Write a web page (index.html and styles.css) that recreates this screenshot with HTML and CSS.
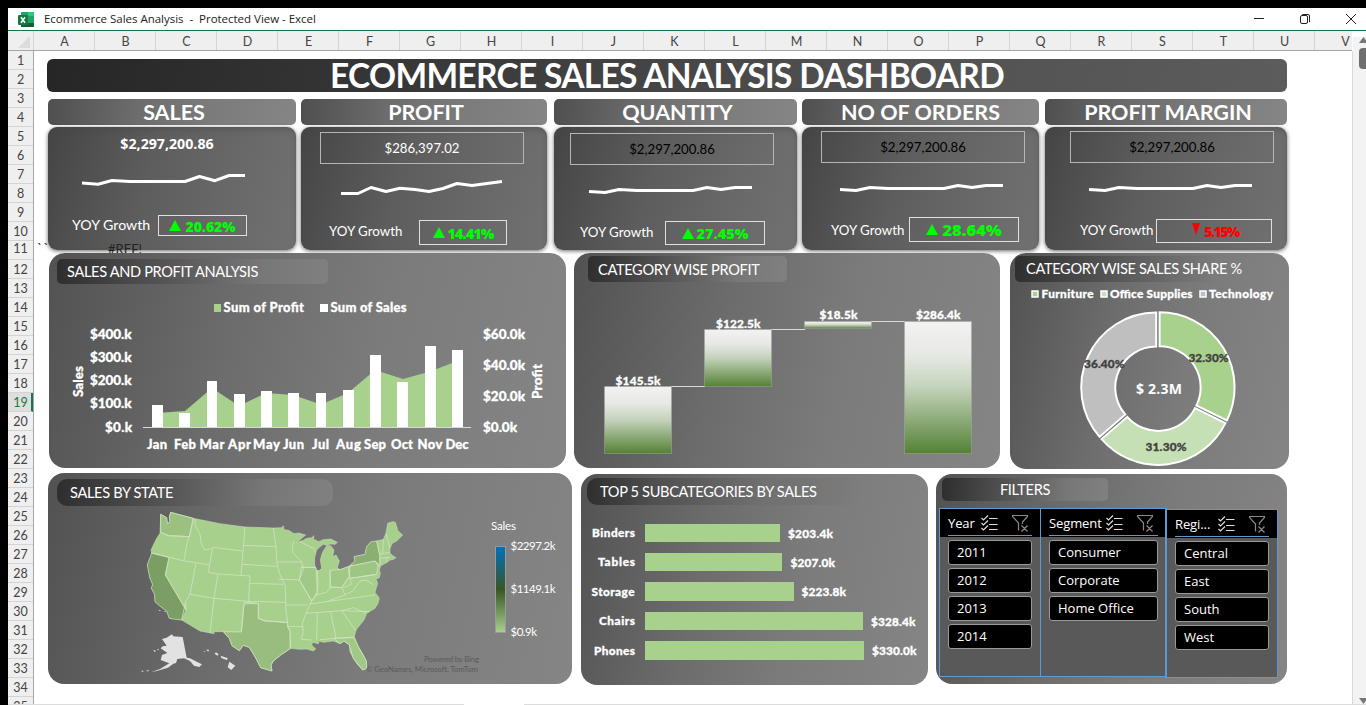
FILE: index.html
```html
<!DOCTYPE html>
<html lang="en">
<head>
<meta charset="utf-8">
<title>Ecommerce Sales Analysis - Excel</title>
<link rel="stylesheet" href="styles.css">
</head>
<body>
<div class="window">
  <header class="titlebar">
    <svg class="xl" width="17" height="17" viewBox="0 0 17 17"><rect x="3" y="1" width="13" height="15" rx="1" fill="#21a366"/><rect x="10" y="1" width="6" height="4" fill="#33c481"/><rect x="3" y="8" width="7" height="4" fill="#107c41"/><rect x="3" y="12" width="13" height="4" fill="#185c37"/><rect x="0" y="4" width="10" height="10" rx="1" fill="#107c41"/><path d="M3 6.2l4 5.6M7 6.2l-4 5.6" stroke="#fff" stroke-width="1.5"/></svg>
    <span class="doc">Ecommerce Sales Analysis&nbsp; -&nbsp; Protected View - Excel</span>
    <svg class="winbtns" width="106" height="16" viewBox="1252 11 106 16" fill="none" stroke="#222"><path d="M1254 18.5h10"/><rect x="1300.500" y="15.500" width="7" height="8" rx="1.500"/><path d="M1302.500 15v-.5h5.500q1.500 0 1.500 1.500v6"/><path d="M1346 14l10 10M1356 14l-10 10"/></svg>
  </header>
  <div class="colheads" id="cols"><span class="corner"><svg width="12" height="12"><path d="M12 0v12H0z" fill="#dcdcdc"/></svg></span></div>
  <div class="main">
    <div class="rowheads" id="rows"></div>
    <main class="sheet">
      <h1 class="banner">ECOMMERCE SALES ANALYSIS DASHBOARD</h1>
      <div class="heads">
        <h2>SALES</h2><h2>PROFIT</h2><h2>QUANTITY</h2><h2>NO OF ORDERS</h2><h2>PROFIT MARGIN</h2>
      </div>
      <div class="cards">
        <section class="card c1">
          <div class="value">$2,297,200.86</div>
          <svg class="spark" viewBox="48 170 248 30"><path d="M82 183L98 184.300L112 180.500L130 181.500H185L199.500 176.500L215 180.700L229 175.500H245"/></svg>
          <div class="growth"><span class="lbl">YOY Growth</span><span class="badge"><svg class="tri" viewBox="0 0 12 11"><path d="M6 0l6 11H0z"/></svg><b>20.62%</b></span></div>
        </section>
        <section class="card c2">
          <div class="value">$286,397.02</div>
          <svg class="spark" viewBox="301 170 246 30"><path d="M341 193.500H358L371 187.500L386 191.500L400 188.300L415 189.500L429 191.500L443 188.500L457 183.500L472 185.500L502 181.500"/></svg>
          <div class="growth"><span class="lbl">YOY Growth</span><span class="badge"><svg class="tri" viewBox="0 0 12 11"><path d="M6 0l6 11H0z"/></svg><b>14.41%</b></span></div>
        </section>
        <section class="card c3">
          <div class="value">$2,297,200.86</div>
          <svg class="spark" viewBox="554 170 243 30"><path d="M589 191.500L605 192.500L619 189.500L637 190.500H693L707 187.500L721 189.500L735 187.500H752"/></svg>
          <div class="growth"><span class="lbl">YOY Growth</span><span class="badge"><svg class="tri" viewBox="0 0 12 11"><path d="M6 0l6 11H0z"/></svg><b>27.45%</b></span></div>
        </section>
        <section class="card c4">
          <div class="value">$2,297,200.86</div>
          <svg class="spark" viewBox="802 170 237 30"><path d="M840 189.500L856 190.500L870 187.500L888 188.500H944L958 185.500L972 187.500L986 185.500H1003"/></svg>
          <div class="growth"><span class="lbl">YOY Growth</span><span class="badge"><svg class="tri" viewBox="0 0 12 11"><path d="M6 0l6 11H0z"/></svg><b>28.64%</b></span></div>
        </section>
        <section class="card c5">
          <div class="value">$2,297,200.86</div>
          <svg class="spark" viewBox="1045 170 242 30"><path d="M1089 189.500L1105 190.500L1119 187.500L1137 188.500H1193L1207 185.500L1221 187.500L1235 185.500H1252"/></svg>
          <div class="growth"><span class="lbl">YOY Growth</span><span class="badge"><svg class="tri" viewBox="0 0 8 12"><path d="M0 0h8L4 12z"/></svg><b>5.15%</b></span></div>
        </section>
        <span class="ticks">``</span><span class="ref">#REF!</span>
      </div>

      <div class="row2">
        <section class="panel p1">
          <h3>SALES AND PROFIT ANALYSIS</h3>
          <svg class="chart" width="517" height="184" viewBox="49 284 517 184">
            <g class="t13">
              <rect x="214" y="304" width="7" height="8" fill="#a9d18e"/><text x="223.500" y="312" textLength="80.500">Sum of Profit</text>
              <rect x="320" y="304" width="8" height="8" fill="#fff"/><text x="330.500" y="312" textLength="76">Sum of Sales</text>
            </g>
            <g class="t14">
              <text x="90" y="339" textLength="41.500">$400.k</text><text x="90" y="362" textLength="41.500">$300.k</text><text x="90" y="385" textLength="41.500">$200.k</text><text x="90" y="408" textLength="41.500">$100.k</text><text x="105" y="432" textLength="27">$0.k</text>
              <text x="483" y="339" textLength="42">$60.0k</text><text x="483" y="370" textLength="42">$40.0k</text><text x="483" y="401" textLength="42">$20.0k</text><text x="483" y="432" textLength="34">$0.0k</text>
              <text transform="translate(82.500 397)rotate(-90)" textLength="31">Sales</text><text transform="translate(542 399)rotate(-90)" textLength="35">Profit</text>
            </g>
            <path fill="#a9d18e" d="M157 413L185 411L212 388L239 406L266 393L293 395L321 404.500L348 393L375 370L403 379L430 371.500L457.500 361V427H157z"/>
            <path fill="#fff" d="M152 405h11v22h-11zM179 413h11v14h-11zM207 381h10v46h-10zM234 394h11v33h-11zM261 391h11v36h-11zM288 393h11v34h-11zM316 393h10v34h-10zM343 390h11v37h-11zM370 355h11v72h-11zM397 382h11v45h-11zM425 346h11v81h-11zM452 350h11v77h-11z"/>
            <path d="M143 427.500h328" stroke="#d9d9d9"/>
            <g class="t13"><text x="147" y="449" textLength="20">Jan</text><text x="174" y="449" textLength="22">Feb</text><text x="199.500" y="449" textLength="25">Mar</text><text x="228" y="449" textLength="23">Apr</text><text x="253" y="449" textLength="27">May</text><text x="283" y="449" textLength="21">Jun</text><text x="312" y="449" textLength="17">Jul</text><text x="336" y="449" textLength="25">Aug</text><text x="364" y="449" textLength="22">Sep</text><text x="391" y="449" textLength="22">Oct</text><text x="417.500" y="449" textLength="25">Nov</text><text x="445.500" y="449" textLength="23">Dec</text></g>
          </svg>
        </section>
        <section class="panel p2">
          <h3>CATEGORY WISE PROFIT</h3>
          <svg class="chart" width="426" height="186" viewBox="574 282 426 186">
            <defs><linearGradient id="bar" x1="0" y1="0" x2="0" y2="1"><stop offset="0" stop-color="#f2f2f2"/><stop offset=".25" stop-color="#e7e9e5"/><stop offset=".5" stop-color="#c4d2bb"/><stop offset="1" stop-color="#548235"/></linearGradient></defs>
            <path d="M671 386.500h34M771 329.500h34M871 321.500h34" stroke="#d9d9d9"/>
            <g fill="url(#bar)" stroke="#a6a6a6" stroke-opacity=".5"><rect x="604.500" y="386.500" width="67" height="67"/><rect x="704.500" y="329.500" width="67" height="57"/><rect x="804.500" y="321.500" width="67" height="7"/><rect x="904.500" y="321.500" width="67" height="132"/></g>
            <g class="t12"><text x="615.500" y="384.500" textLength="45">$145.5k</text><text x="716" y="327.500" textLength="44.500">$122.5k</text><text x="819.500" y="319" textLength="38">$18.5k</text><text x="916" y="319" textLength="44.500">$286.4k</text></g>
          </svg>
        </section>
        <section class="panel p3">
          <h3>CATEGORY WISE SALES SHARE %</h3>
          <svg class="chart" width="279" height="187" viewBox="1010 282 279 187">
            <g stroke="#fff" stroke-width="1.500"><rect x="1032" y="291" width="6" height="6" fill="#a9d18e"/><rect x="1101" y="291" width="6" height="6" fill="#c5e0b4"/><rect x="1200" y="291" width="6" height="6" fill="#bfbfbf"/></g>
            <g class="t12"><text x="1041.500" y="298" textLength="52">Furniture</text><text x="1110" y="298" textLength="82.500">Office Supplies</text><text x="1209" y="298" textLength="64">Technology</text></g>
            <g transform="translate(1157.900 388.400)" stroke="#fff" stroke-width="2">
              <path transform="translate(1.700 -1.100)" fill="#a9d18e" d="M0-75A75 75 0 0 1 67.250 33.200L36.800 18.200A41 41 0 0 0 0-41z"/>
              <path transform="translate(.300 1.500)" fill="#c5e0b4" d="M67.250 33.200A75 75 0 0 1-56.600 49.200L-30.900 26.900A41 41 0 0 0 36.800 18.200z"/>
              <path transform="translate(-1.700 -.800)" fill="#bfbfbf" d="M-56.600 49.200A75 75 0 0 1 0-75V-41A41 41 0 0 0-30.900 26.900z"/>
            </g>
            <g class="t12 dark"><text x="1188.500" y="362" textLength="40">32.30%</text><text x="1145.500" y="451" textLength="41">31.30%</text><text x="1084" y="368" textLength="40.500">36.40%</text></g>
            <text class="total" x="1136" y="394" textLength="46">$ 2.3M</text>
          </svg>
        </section>
      </div>

      <div class="row3">
        <section class="panel p4">
          <h3>SALES BY STATE</h3>
          <svg class="chart" width="524" height="178" viewBox="48 506 524 178">
            <defs><linearGradient id="scale" x1="0" y1="0" x2="0" y2="1"><stop offset="0" stop-color="#0070c0"/><stop offset=".5" stop-color="#375623"/><stop offset="1" stop-color="#a9d18e"/></linearGradient></defs>
            <g transform="translate(140 505)scale(.33333)" stroke="#d3e3c6" stroke-width="2.300" stroke-linejoin="round">
              <path fill="#a6d08b" stroke-width="1.500" d="M62 28L80 38L82 56L90 50L88 36L92 22L160 40L240 56L315 66L400 69L425 68L430 62L432 74L446 76L462 86L476 84L497 90L480 104L470 112L490 106L500 100L515 98L522 92L520 102L536 110L550 104L572 102L580 106L592 112L586 118L572 117L560 121L550 118L540 125L530 135L524 158L524 180L530 198L540 195L545 190L541 165L545 150L550 138L560 122L572 122L582 135L578 155L588 150L598 168L592 188L600 194L625 185L645 168L642 155L675 148L680 125L692 111L710 108L730 103L738 85L743 55L758 50L766 52L774 78L788 90L770 108L757 115L750 130L750 144L758 152L768 158L758 164L750 165L742 172L722 182L718 195L721 205L718 218L708 222L713 235L705 262L718 280L714 295L705 310L680 325L672 345L660 360L648 375L643 395L655 425L668 446L679 468L680 490L668 495L652 478L640 460L630 440L628 420L612 408L600 416L580 408L550 412L537 408L535 416L518 412L515 420L527 432L520 438L500 432L480 433L452 430L425 448L400 468L393 480L396 498L362 488L345 455L328 427L310 421L298 437L276 422L268 400L250 380L222 380L222 386L180 378L125 345L88 340L80 318L62 305L45 290L44 268L34 250L38 238L30 220L22 180L35 145L33 135L50 100L60 85L61 60z"/>
              <path fill="#9bc181" d="M62 28L80 38L82 56L90 50L88 36L92 22L160 40L148 95L115 93L85 92L62 82z"/>
              <path fill="#7b9e65" stroke-width="1.500" d="M35 145L87 158L76 210L138 315L125 345L88 340L80 318L62 305L45 290L44 268L34 250L38 238L30 220L22 180z"/>
              <path fill="#98bd7e" d="M312 296H355V340L375 348L410 350L443 353V365L450 378L452 430L425 448L400 468L393 480L396 498L362 488L345 455L328 427L310 421L298 437L276 422L268 400L250 380L304 381z"/>
              <path fill="#8aaf72" stroke-width="1.500" d="M645 168L642 155L675 148L680 125L692 111L710 108L719 150L720 180L705 168L630 183z"/>
              <path fill="#9dc584" d="M625 185L705 168L714 180L710 208L630 220z"/><path fill="#a0c987" d="M570 196L600 194L625 185L628 215L605 248L572 246zM484 187L528 188L532 260L515 288L500 262L478 225zM582 400L642 398L655 425L679 468L680 490L668 495L640 460L628 420L612 408L600 416z"/>
              <path fill="none" d="M62 82L85 92L148 95M33 143L129 167L208 180M148 95L142 112L132 165M166 43L165 60L180 88L183 112L193 134L214 132M160 40L148 95M218 127L205 202M218 127L308 138M87 158L76 210L138 315L137 290L150 268L168 175M150 268L222 280L326 289L438 292M137 290L125 345M234 208L222 280L210 384M205 202L234 207L330 213M315 66L303 211M310 121L408 125M307 178L390 183L410 184M400 69L408 125L410 170L418 205L435 240L438 300M410 171H486M330 213L326 289M330 235L430 238M415 223L475 224M463 108L456 125L460 145L484 170L490 190L478 225L500 262L515 288L500 320L487 355L490 380L484 403L515 405M480 110L520 130L524 140M484 187H528M532 195L534 240L530 270M570 196V246M312 296L304 381M310 290L355 296V340L375 348L410 350L443 353V365L450 378V430M438 300H502M436 300L443 353M444 365H488M510 297L560 290L705 270M500 325L605 317L690 320M532 324L530 405M572 321L588 400L540 404M588 400L642 396M605 317L648 378M605 317L640 308L680 325M515 288L530 270L560 262L572 246L605 248L628 215L630 183M605 248L615 270L560 290M615 270L638 258L660 228L680 225L700 240M630 220L710 208M710 108L719 150L720 180M730 104L728 145M738 85L750 130M719 148L750 142M720 160L750 157M740 157V170M705 168L718 184M630 220L634 238L610 248"/>
              <g fill="#e2e2e2" stroke="none"><path d="M96 388L100 394L128 396L140 458L150 460L170 470L186 478L178 486L162 482L150 468L132 460L112 462L108 474L100 476L84 488L50 498L34 501L60 492L88 475L76 470L62 465L66 450L82 444L62 430L68 424L80 422L66 402L80 398z"/><path d="M268 470L286 482L274 495L263 487zM228 442l8 6-4 4-8-6zM242 452l22 8-4 5-16-6zM198 434h9l-2 6zM190 438h5v3zM20 496h6v3h-6zM5 497h5v3H5zM40 434l8 4-5 3zM50 432h6v4zM55 315h6v4zM70 319h7v3z"/></g>
            </g>
            <g class="reg"><text x="491" y="530" textLength="25">Sales</text><text x="510.500" y="550" textLength="45">$2297.2k</text><text x="510.500" y="593" textLength="45">$1149.1k</text><text x="510.500" y="636" textLength="26.500">$0.9k</text></g>
            <rect x="495.500" y="546.500" width="10" height="86" fill="url(#scale)" stroke="#9a9a9a"/>
            <g class="credit"><text x="424" y="662" textLength="55">Powered by Bing</text><text x="366" y="672" textLength="112">© GeoNames, Microsoft, TomTom</text></g>
          </svg>
        </section>
        <section class="panel p5">
          <h3>TOP 5 SUBCATEGORIES BY SALES</h3>
          <svg class="chart" width="347" height="180" viewBox="581 505 347 180">
            <path fill="#a9d18e" d="M645 524h135v18H645zM645 553h137v18H645zM645 582h149v19H645zM645 612h218v18H645zM645 641h219v19H645z"/>
            <g class="t12"><text x="592" y="537" textLength="43">Binders</text><text x="598" y="566" textLength="37">Tables</text><text x="591.500" y="596" textLength="43">Storage</text><text x="599" y="625" textLength="36">Chairs</text><text x="594" y="655" textLength="41">Phones</text>
            <text x="788" y="538" textLength="45">$203.4k</text><text x="790.500" y="567" textLength="44.500">$207.0k</text><text x="801.500" y="596" textLength="44.500">$223.8k</text><text x="871" y="626" textLength="44.500">$328.4k</text><text x="872" y="655" textLength="44.500">$330.0k</text></g>
          </svg>
        </section>
        <section class="panel p6">
          <h3>FILTERS</h3>
          <svg width="0" height="0" class="defs"><symbol id="multi" viewBox="0 0 17 16"><path d="M.5 3l2 2L7 .5M.5 8l2 2L7 5.500M.5 13l2 2L7 10.500M8 3.500h8.500M8 9.500h8.500M8 14.500h8.500" fill="none" stroke="currentColor" stroke-width="1.200"/></symbol><symbol id="clear" viewBox="0 0 17 17"><path d="M6.500 15.500V8L.5 1.500V.5h15v1L10.500 7v2M9.500 10.500l6 6M15.500 10.500l-6 6" fill="none" stroke="currentColor" stroke-width="1.200"/></symbol></svg>
          <div class="slicers">
            <div class="slicer"><div class="sh"><span>Year</span><svg class="mi"><use href="#multi"/></svg><svg class="ci"><use href="#clear"/></svg></div><ul><li>2011</li><li>2012</li><li>2013</li><li>2014</li></ul></div>
            <div class="slicer seg"><div class="sh"><span>Segment</span><svg class="mi"><use href="#multi"/></svg><svg class="ci"><use href="#clear"/></svg></div><ul><li>Consumer</li><li>Corporate</li><li>Home Office</li></ul></div>
            <div class="slicer regn"><div class="sh"><span>Regi...</span><svg class="mi"><use href="#multi"/></svg><svg class="ci"><use href="#clear"/></svg></div><ul><li>Central</li><li>East</li><li>South</li><li>West</li></ul></div>
          </div>
        </section>
      </div>
    </main>
    <aside class="scroll"><svg width="9" height="6"><path d="M0 6l4.500-6L9 6z" fill="#777"/></svg><i></i><svg class="dn" width="9" height="6"><path d="M0 0h9L4.500 6z" fill="#777"/></svg></aside>
  </div>
  <footer class="bottom"><i></i><i></i></footer>
</div>
<script src="grid.js"></script>
</body>
</html>
```
FILE: grid.js
```js
const cols = document.getElementById('cols');
for (const c of 'ABCDEFGHIJKLMNOPQRSTUV') {
  const s = document.createElement('span');
  s.textContent = c;
  cols.appendChild(s);
}
const rows = document.getElementById('rows');
for (let r = 1; r <= 35; r++) {
  const s = document.createElement('span');
  s.textContent = r;
  if (r === 19) s.className = 'active';
  rows.appendChild(s);
}
```
FILE: styles.css
```css
*{box-sizing:border-box}
body{margin:0;background:#000;width:1366px;height:705px;overflow:hidden;font-family:Lato,"Open Sans",sans-serif}
h1,h2,h3,ul{margin:0;padding:0;font-weight:400;list-style:none}
svg{display:block;flex:none}
.window{margin:8px 0 0 8px;width:1358px;height:697px;background:#fff;display:flex;flex-direction:column}
.titlebar{height:23px;flex:none;border-bottom:1px solid #107c41;display:flex;align-items:center;padding:0 8px 0 10px}
.doc{font:11.500px "Open Sans",sans-serif;letter-spacing:-.02px;color:#222;margin:-2px 0 0 9px;white-space:nowrap}
.winbtns{margin-left:auto}
.colheads{height:20px;flex:none;background:#efefef;border-bottom:1px solid #a6a6a6;display:flex;overflow:hidden;width:1344px}
.colheads span{flex:0 0 61px;border-right:1px solid #d4d4d4;font-size:12.500px;line-height:22px;text-align:center;color:#444;padding-left:1px}
.colheads .corner{flex-basis:26px;padding:5px 0 0 10px}
.main{height:653px;flex:none;display:flex}
.rowheads{width:26px;flex:none;background:#efefef;border-right:1px solid #a6a6a6;height:653px;overflow:hidden}
.rowheads span{display:block;height:19px;border-bottom:1px solid #d4d4d4;font-size:12.500px;line-height:20px;text-align:center;color:#444}
.rowheads span:nth-child(11){line-height:16px}
.rowheads .active{background:#dedede;color:#107c41;border-right:2px solid #107c41;padding-left:2px}
.sheet{width:1319px;flex:none;border-right:1px solid #d9d9d9;padding:8px 0 0 13px}
.banner{width:1240px;height:33px;border-radius:6px;background:linear-gradient(100deg,#262626,#3b3b3b 35%,#505050 65%,#5c5c5c);color:#fff;font-size:33.500px;letter-spacing:-.68px;font-weight:700;line-height:33px;text-align:center;white-space:nowrap}
.heads{display:grid;grid-template-columns:253px 253px 248px 243px 242px;margin:7px 0 0 1px}
.heads h2{height:26px;border-radius:5px;background:linear-gradient(95deg,#4f4f4f,#6c6c6c 35%,#7b7b7b 65%,#858585);color:#fff;font-size:21.500px;font-weight:700;line-height:27px;text-align:center;white-space:nowrap;width:248px;padding-left:4px}
.heads h2:nth-child(2){width:246px}.heads h2:nth-child(3){width:243px}.heads h2:nth-child(4){width:237px;padding:0}.heads h2:nth-child(5){width:242px}
.cards{display:grid;grid-template-columns:253px 253px 248px 243px 242px;margin:2px 0 0 1px;height:123px;position:relative}
.card{height:123px;border-radius:9px;background:linear-gradient(105deg,#454545,#5d5d5d 40%,#686868 70%,#717171);box-shadow:0 1px 4px rgba(0,0,0,.6),inset 0 3px 5px rgba(70,70,70,.4);overflow:hidden;display:flex;flex-direction:column;color:#fff}
.c1{width:248px}.c2{width:246px}.c3{width:243px}.c4{width:237px}.c5{width:242px}
.value{height:32px;width:204px;border:1px solid #b5b5b5;font-size:13.200px;line-height:31px;text-align:center;color:#000;flex:none}
.c1 .value{border-color:transparent;color:#fff;font:700 14.200px/29px "Open Sans",sans-serif;margin:1px 0 0 17px}
.c2 .value{margin:5px 0 0 19px;color:#fff}.c3 .value{margin:6px 0 0 16px}.c4 .value{margin:4px 0 0 19px}.c5 .value{margin:4px 0 0 25px}
.spark{height:30px;width:100%;fill:none;stroke:#fff;stroke-width:3;stroke-linejoin:round}
.c1 .spark{margin-top:10px}.c2 .spark{margin-top:6px}.c3 .spark{margin-top:5px}.c4 .spark,.c5 .spark{margin-top:7px}
.growth{display:flex;align-items:center;font-size:13.300px;white-space:nowrap}
.lbl{padding-bottom:2px}
.c1 .lbl{font-size:14.200px}
.c2 .lbl{padding-bottom:4px}
.c4 .lbl{padding-bottom:0}
.badge{border:1px solid #e0e0e0;display:flex;align-items:center;justify-content:center;gap:4px;color:#0f0;font:700 14px "Open Sans",sans-serif;line-height:20px;flex:none}
.badge b{padding-top:2px}
.tri{width:12px;height:11px;fill:currentColor}
.c1 .growth{margin:15px 0 0 24px}.c1 .lbl{width:86px}.c1 .badge{width:89px;height:21px}
.c2 .growth{margin:20px 0 0 28px}.c2 .lbl{width:90px}.c2 .badge{width:88px;height:25px;letter-spacing:-.7px}
.c2 .badge,.c3 .badge{gap:3px}
.c3 .growth{margin:21px 0 0 26px}.c3 .lbl{width:85px}.c3 .badge{width:100px;height:24px;font-size:14.500px}
.c4 .growth{margin:17px 0 0 29px}.c4 .lbl{width:78px}.c4 .badge{width:110px;height:25px;font-size:16.500px}.c4 .badge b{padding:0}
.c5 .growth{margin:19px 0 0 35px}.c5 .lbl{width:76px}.c5 .badge{width:116px;height:24px;color:red;letter-spacing:-1.500px;padding-left:3px}
.c5 .tri{width:8px;height:12px;margin-top:-4px}
.ticks,.ref{position:absolute;font-size:13.500px;line-height:16px;color:#222}
.ticks{left:-11px;top:113px;letter-spacing:1px}
.ref{left:60px;top:114px;font-size:13px}
.row2,.row3{display:grid;position:relative;z-index:1}
.row2{grid-template-columns:525px 436px 279px;margin:3px 0 0 2px}
.row3{grid-template-columns:533px 355px 351px;margin:4px 0 0 1px}
.panel{height:215px;border-radius:16px;background:linear-gradient(102deg,#525252,#6c6c6c 35%,#7b7b7b 62%,#858585)}
.panel h3{color:#fff;font-size:14.600px;letter-spacing:-.34px;white-space:nowrap;background:linear-gradient(95deg,#2e2e2e,#505050 35%,#777 75%,#808080)}
.p1{width:517px}.p2{width:426px}.p3{width:279px;height:216px}.p4{width:524px;height:211px}.p5{width:347px;height:211px;margin-top:1px}.p6{width:351px;height:210px;margin-top:1px}
.panel::before{content:"";display:block;height:6px}
.p1 h3{margin-left:8px;width:271px;height:25px;line-height:26px;padding-left:10px;border-radius:5px}
.p2::before,.p3::before{height:3px}
.p2 h3{margin-left:14px;width:199px;height:26px;line-height:28px;padding-left:10px;border-radius:5px}
.p3 h3{margin-left:5px;width:200px;height:26px;line-height:26px;padding-left:11px;border-radius:5px;background:linear-gradient(95deg,#2e2e2e,#4b4b4b 35%,#717171 85%,#74747400)}
.p4 h3{margin-left:9px;width:276px;height:27px;line-height:28px;padding-left:13px;border-radius:10px}
.p5::before,.p6::before{height:4px}
.p5 h3{margin-left:6px;width:275px;height:27px;line-height:28px;padding-left:13px;border-radius:10px;background:linear-gradient(95deg,#2e2e2e,#505050 25%,#717171 65%,#7b7b7b00)}
.p6 h3{margin-left:6px;width:166px;height:23px;line-height:24px;text-align:center;border-radius:5px}
.chart{overflow:visible}
.chart text{fill:#fff;font-family:Lato,sans-serif}
.t13 text{font-size:13px;font-weight:900}
.t14 text{font-size:13.500px;font-weight:900}
.t12 text{font-size:11.800px;font-weight:900}
.t12 text,.t13 text,.t14 text{stroke:#fff;stroke-width:.3px}
.chart .dark text{fill:#404040;stroke:#404040}
.chart .total{font:700 14px "Open Sans",sans-serif}
.chart .reg text{font-size:11.500px}
.chart .credit text{font-size:7.800px;fill:#5b5b5b}
.defs{position:absolute}
.slicers{display:flex;margin:7px 0 0 3px;font:13px "Open Sans",sans-serif;color:#fff}
.slicer{width:102px;height:169px;border:1px solid #5b9bd5;background:#595959}
.slicer.seg{width:127px;margin-left:-1px}
.slicer.regn{width:113px;margin-top:1px;border-left-width:2px;margin-left:-2px}
.sh{height:28px;display:flex;align-items:center;padding:0 11px 0 8px;background:linear-gradient(#5b9bd5,#5b9bd5) 8px 26px/calc(100% - 16px) 1px no-repeat #000}
.seg .sh{padding-right:12px}
.sh span{flex:1;letter-spacing:-.1px;white-space:nowrap}
.mi{width:17px;height:16px;margin-right:14px;color:#ddd}
.ci{width:17px;height:17px;color:#8a8a8a}
.slicer ul{padding:3px 8px 0}
.slicer li{height:25px;margin-bottom:3px;border:1px solid #999;border-radius:3px;background:#000;padding-left:8px;line-height:22px}
.scroll{width:13px;flex:none;background:#f3f3f3;display:flex;flex-direction:column;align-items:flex-end;margin-top:-14px;height:667px;position:relative}
.scroll i{width:7px;height:21px;background:#6e6e6e;border-radius:4px 0 0 4px;margin-top:5px}
.scroll svg{margin-right:-2px}
.scroll .dn{margin-top:auto}
.bottom{height:1px;flex:none;display:flex;gap:60px}
.bottom i{background:#dcdcdc;width:456px}.bottom i+i{flex:1}
```
